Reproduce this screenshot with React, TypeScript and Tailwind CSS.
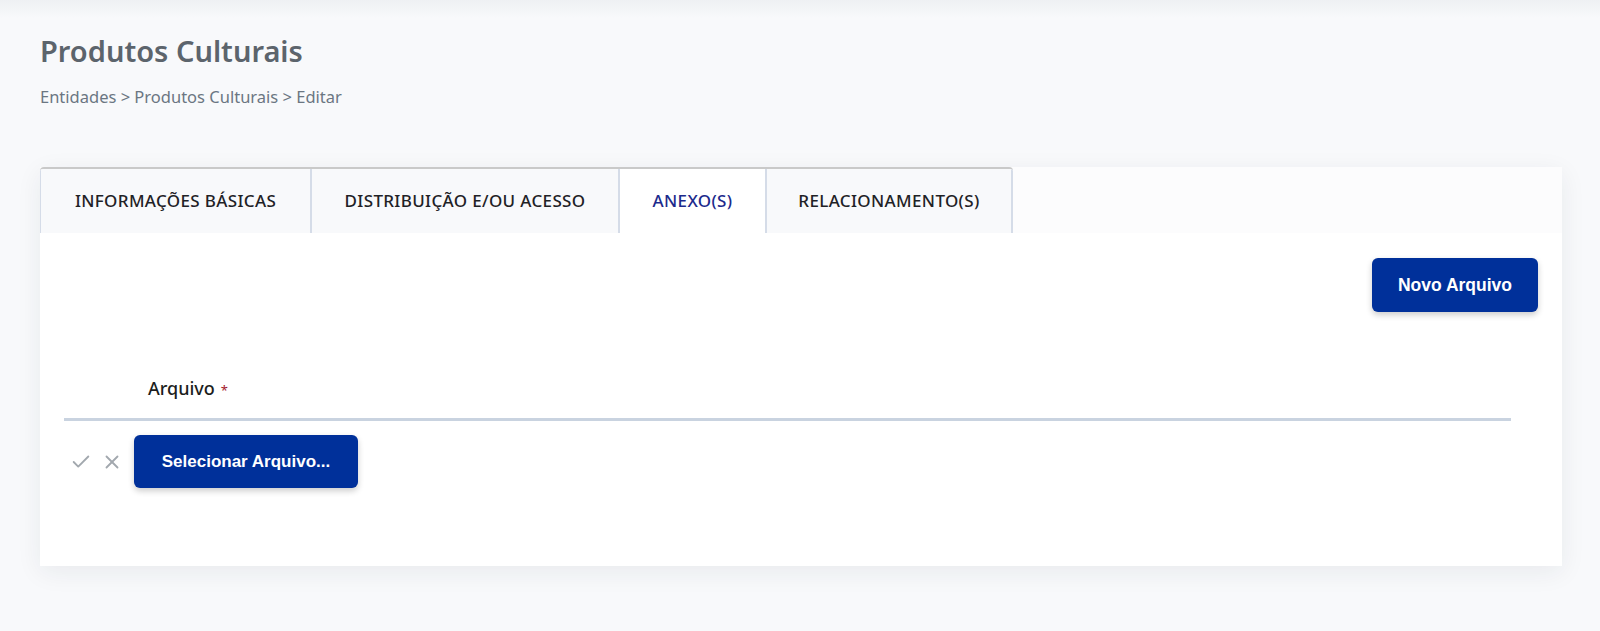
import { Check, X } from "lucide-react";

const tabs = [
  { label: "INFORMAÇÕES BÁSICAS", width: "w-[270px]", active: false },
  { label: "DISTRIBUIÇÃO E/OU ACESSO", width: "w-[308px]", active: false },
  { label: "ANEXO(S)", width: "w-[147px]", active: true },
  { label: "RELACIONAMENTO(S)", width: "w-[248px]", active: false },
];

export default function App() {
  return (
    <div className="min-h-[631px] bg-[#f8f9fb] font-['Noto_Sans',sans-serif]">
      <div className="h-[18px] bg-gradient-to-b from-[#eef0f3] to-[#f8f9fb]" />

      <div className="pl-[40px] pr-[38px] pt-[15px]">
        <h1 className="text-[29px] font-semibold leading-[36px] text-[#5c646c]">Produtos Culturais</h1>
        <p className="mt-[17px] text-[16.5px] leading-[22px] text-[#6b7682]">
          Entidades &gt; Produtos Culturais &gt; Editar
        </p>

        <div className="mt-[59px] shadow-[0_6px_24px_rgba(30,40,60,0.07)]">
          <div className="flex h-[66px] bg-[#fcfcfd]">
            <div className="flex overflow-hidden rounded-t-[4px] border-t-2 border-[#c9c9c9]">
              {tabs.map((tab, i) => (
                <div
                  key={tab.label}
                  className={`flex ${tab.width} items-center justify-center text-[17px] font-medium tracking-[0.35px] ${
                    i > 0 ? "border-l-2 border-[#d5dce8]" : "border-l border-[#d5dce8]"
                  } ${i === tabs.length - 1 ? "border-r-2" : ""} ${
                    tab.active
                      ? "-mt-[2px] border-t-2 border-t-[#0b1a8f] bg-white text-[#1c2a8c]"
                      : "bg-[#f8f9fb] text-[#1f2226]"
                  }`}
                >
                  {tab.label}
                </div>
              ))}
            </div>
          </div>

          <div className="h-[333px] bg-white pl-[24px] pr-[51px]">
            <div className="-mr-[27px] flex justify-end pt-[25px]">
              <button className="h-[54px] w-[166px] rounded-[6px] bg-[#00309a] font-['Liberation_Sans',sans-serif] text-[17.5px] font-bold text-white shadow-[0_3px_6px_rgba(0,0,0,0.2)]">
                Novo Arquivo
              </button>
            </div>

            <div className="mt-[63px] border-b-[3px] border-[#c9d3e0] pb-[16px] pl-[84px]">
              <span className="text-[18px] font-medium text-[#1b1d20]">Arquivo</span>
              <span className="ml-[6px] text-[13px] text-[#a3182b]">*</span>
            </div>

            <div className="mt-[14px] flex items-center">
              <div className="flex w-[70px] items-center gap-[9px] pl-[6px] text-[#a2a8ae]">
                <Check size={22} strokeWidth={2} />
                <X size={22} strokeWidth={2} />
              </div>
              <button className="h-[53px] w-[224px] rounded-[6px] bg-[#00309a] font-['Liberation_Sans',sans-serif] text-[17px] font-bold text-white shadow-[0_3px_6px_rgba(0,0,0,0.2)]">
                Selecionar Arquivo...
              </button>
            </div>
          </div>
        </div>
      </div>
    </div>
  );
}
